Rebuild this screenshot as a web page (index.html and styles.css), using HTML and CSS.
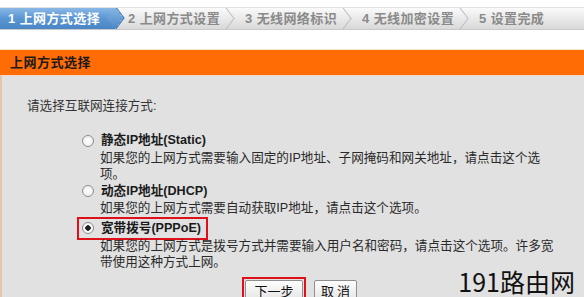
FILE: index.html
```html
<!DOCTYPE html>
<html lang="zh-CN">
<head>
    <meta charset="UTF-8">
    <title>设置向导</title>
    <link rel="stylesheet" href="styles.css">
</head>
<body>
<!-- wizard steps -->
<div class="steps">
    <div class="step active">1 上网方式选择</div>
    <div class="step">2 上网方式设置</div>
    <div class="step">3 无线网络标识</div>
    <div class="step">4 无线加密设置</div>
    <div class="step last">5 设置完成</div>
</div>

<div class="panel-title">上网方式选择</div>

<div class="panel">
    <p class="intro">请选择互联网连接方式:</p>

    <div class="options">
        <label class="option">
            <span class="radio"></span>
            <span class="name">静态IP地址(Static)</span>
        </label>
        <p class="desc">如果您的上网方式需要输入固定的IP地址、子网掩码和网关地址，请点击这个选项。</p>

        <label class="option">
            <span class="radio"></span>
            <span class="name">动态IP地址(DHCP)</span>
        </label>
        <p class="desc">如果您的上网方式需要自动获取IP地址，请点击这个选项。</p>

        <label class="option checked marked">
            <span class="radio"></span>
            <span class="name">宽带拨号(PPPoE)</span>
        </label>
        <p class="desc">如果您的上网方式是拨号方式并需要输入用户名和密码，请点击这个选项。许多宽带使用这种方式上网。</p>
    </div>

    <div class="buttons">
        <span class="mark"><button type="button" class="next">下一步</button></span>
        <button type="button" class="cancel">取 消</button>
    </div>

    <div class="watermark">191路由网</div>
</div>
</body>
</html>
```

FILE: styles.css
```css
body {
    margin: 0;
    background: #fff;
    font-family: "Liberation Sans", "Noto Sans CJK SC", sans-serif;
    font-size: 12.6px;
    color: #222;
    height: 297px;
    overflow: hidden;
}

.steps {
    display: flex;
    margin-top: 7px;
    height: 21px;
    background: linear-gradient(#fafafa, #e6e6e6 60%, #d9d9d9);
    border-top: 1px solid #e2e2e2;
    border-bottom: 1px solid #c9c9c9;
    overflow: hidden;
    font-size: 13px;
}

.step {
    position: relative;
    width: 104px;
    padding-left: 13px;
    line-height: 21px;
    color: #8a8a8a;
    font-weight: bold;
    letter-spacing: 0.4px;
    white-space: nowrap;
}

.step::after {
    content: "";
    position: absolute;
    top: 1px;
    right: -1px;
    width: 14px;
    height: 14px;
    border-top: 1px solid #bdbdbd;
    border-right: 1px solid #bdbdbd;
    transform: rotate(45deg) skew(8deg, 8deg);
    margin-top: 2px;
    z-index: 1;
}

.step.active {
    color: #fff;
    background: linear-gradient(#8ab8e6, #5895d2 50%, #4a86c6);
    padding-left: 8px;
    width: 107px;
}

.step.active::after {
    border: none;
    right: -7px;
    background: linear-gradient(135deg, #8ab8e6, #4a86c6);
    box-shadow: 1px -1px 0 #3f78b3;
}

.step.last::after {
    display: none;
}

.panel-title {
    margin-top: 19px;
    height: 25px;
    line-height: 25px;
    padding-left: 10px;
    background: #ff6c06;
    border-top: 1px solid #fde7c4;
    font-size: 13px;
    font-weight: bold;
    color: #1a1a1a;
    letter-spacing: 0.5px;
}

.panel {
    position: relative;
    height: 230px;
    background: #e1e1e1;
    border-left: 2px solid #e6c4a6;
    border-top: 1px solid #f0d8c4;
    padding: 22px 0 0 25px;
}

.intro {
    margin: 0 0 18px;
    line-height: 16px;
    color: #333;
}

.options {
    padding-left: 73px;
}

.option {
    display: inline-flex;
    align-items: center;
    gap: 7px;
    line-height: 17px;
    margin-left: -20px;
    padding: 0 4px 0 2px;
}

.option .radio {
    width: 10px;
    height: 10px;
    border: 1px solid #8d8d8d;
    border-radius: 50%;
    background: radial-gradient(#fff, #e8e8e8);
}

.option.checked .radio {
    background: radial-gradient(circle, #222 0 2.5px, #fff 3px, #e8e8e8);
}

.option .name {
    font-weight: bold;
    color: #1a1a1a;
}

.option.marked {
    outline: 2px solid #e0101a;
    outline-offset: 1px;
    margin-top: 3px;
    margin-bottom: 1px;
}

.desc {
    margin: 0;
    width: 460px;
    line-height: 16.5px;
    color: #2a2a2a;
}

.buttons {
    display: flex;
    gap: 8px;
    margin: 6px 0 0 215px;
    align-items: center;
}

.mark {
    display: inline-block;
    border: 2px solid #e0101a;
    padding: 1px;
}

.buttons button {
    font-family: "Noto Sans CJK SC", sans-serif;
    font-size: 13px;
    line-height: 18px;
    color: #111;
    padding: 0;
    height: 22px;
    border: 1px solid #8f8f8f;
    border-radius: 2px;
    background: linear-gradient(#fdfdfd, #e4e4e4);
}

.buttons .next {
    width: 58px;
}

.buttons .cancel {
    width: 43px;
}

.watermark {
    position: absolute;
    right: 9px;
    top: 193px;
    font-family: "Noto Sans CJK SC", sans-serif;
    font-size: 25px;
    line-height: 24px;
    color: #111;
}
```
